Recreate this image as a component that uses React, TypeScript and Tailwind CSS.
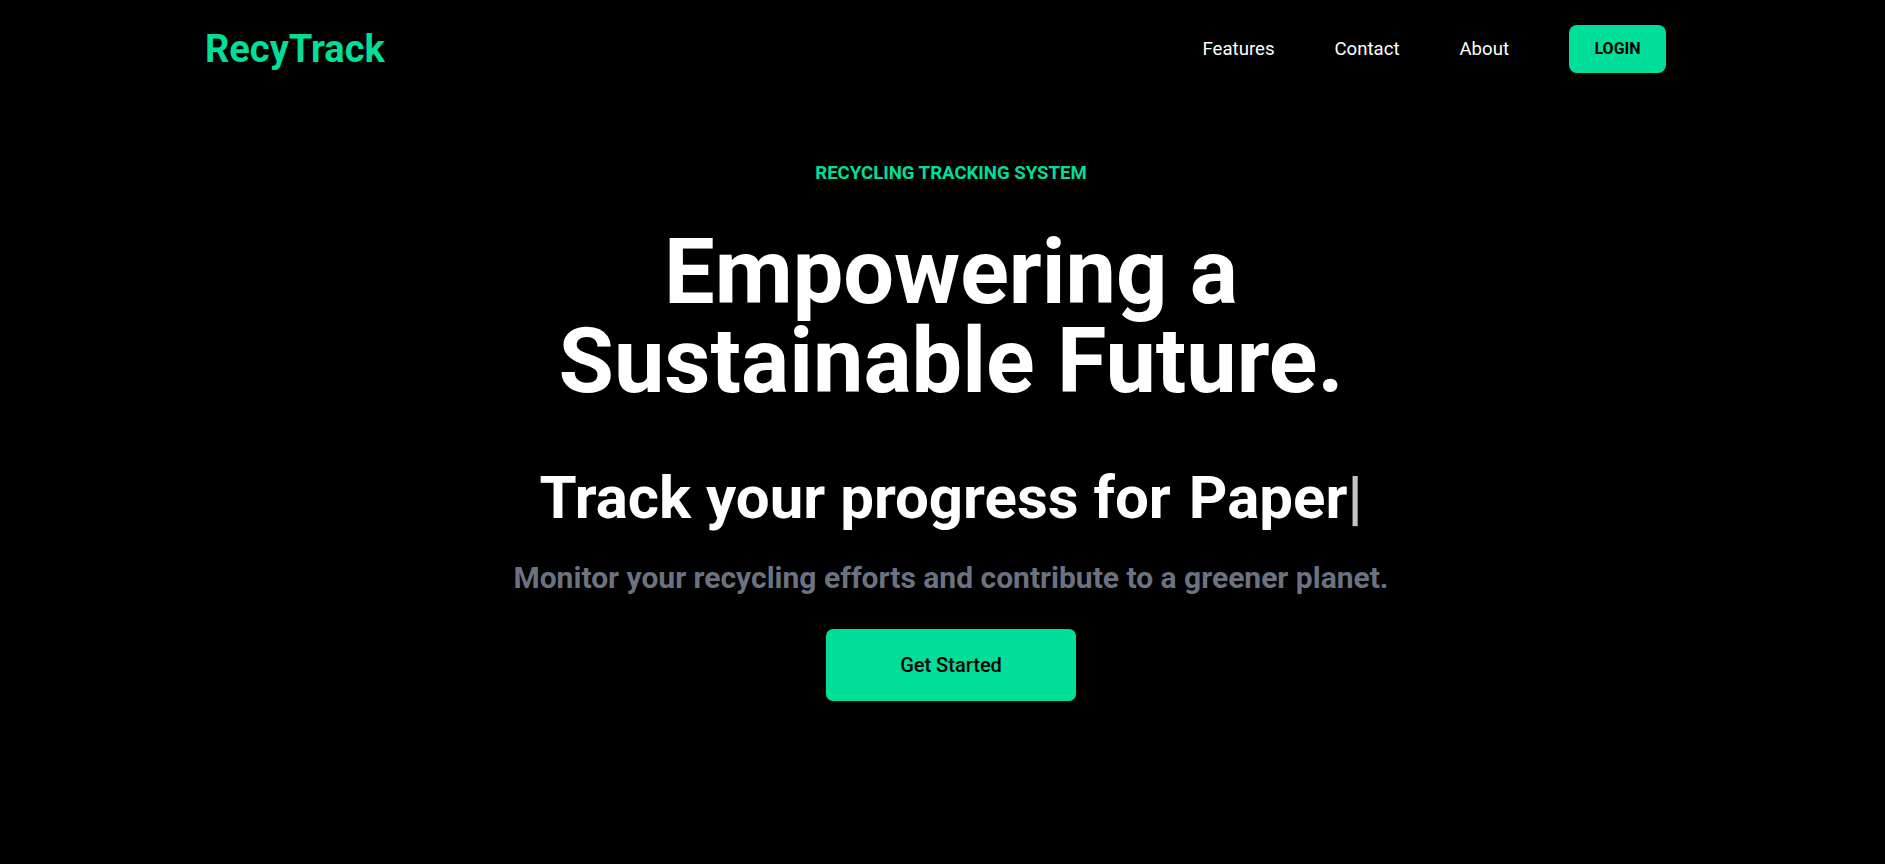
import React from 'react';

const navLinks = ['Features', 'Contact', 'About'];

const Navbar = () => {
  return (
    <nav className="flex h-[98px] items-center justify-between pl-[205px] pr-[219px] text-white">
      <h1 className="text-[38px] font-bold text-[#00df9a]">RecyTrack</h1>
      <ul className="flex items-center">
        {navLinks.map((link) => (
          <li key={link} className="mr-[60px] pt-[2px] text-[18.6px]">
            {link}
          </li>
        ))}
        <li>
          <button className="h-[48px] w-[97px] rounded-[8px] bg-[#00df9a] text-[16px] font-bold text-black">
            LOGIN
          </button>
        </li>
      </ul>
    </nav>
  );
};

const Hero = () => {
  return (
    <div className="flex w-full flex-col items-center pl-[17px] text-center text-white">
      <p className="mt-[61px] text-[18.6px] leading-[28px] font-bold text-[#00df9a]">
        RECYCLING TRACKING SYSTEM
      </p>
      <h1 className="mt-[41px] text-[90px] leading-[89px] font-bold">
        Empowering a
        <br />
        Sustainable Future.
      </h1>
      <div className="mt-[62px] flex items-center text-[60px] leading-[60px] font-bold">
        <p>Track your progress for</p>
        <p className="pl-[18px]">
          Paper<span className="text-[#c4c4c4]">|</span>
        </p>
      </div>
      <p className="mt-[32px] text-[30px] leading-[36px] font-bold text-[#6b7280]">
        Monitor your recycling efforts and contribute to a greener planet.
      </p>
      <button className="mt-[33px] h-[72px] w-[250px] rounded-[7px] bg-[#00df9a] text-[20px] font-medium text-black">
        Get Started
      </button>
    </div>
  );
};

export default function App() {
  return (
    <div className="min-h-[864px] w-full bg-black font-['Roboto',sans-serif]">
      <Navbar />
      <Hero />
    </div>
  );
}
